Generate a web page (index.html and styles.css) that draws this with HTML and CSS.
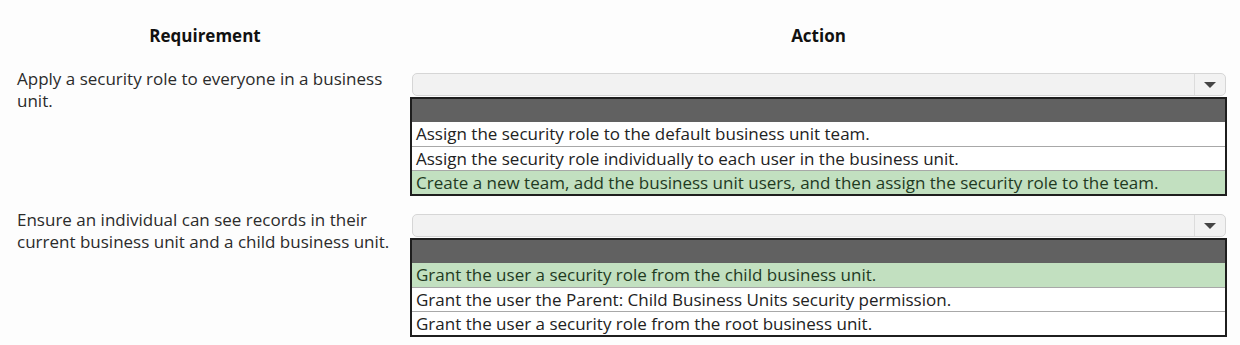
FILE: index.html
```html
<!DOCTYPE html>
<html>
<head>
<meta charset="utf-8">
<link rel="stylesheet" href="styles.css">
</head>
<body>
<div class="page">
  <div class="head">
    <div class="h-req">Requirement</div>
    <div class="h-act">Action</div>
  </div>
  <div class="row">
    <div class="req">Apply a security role to everyone in a business unit.</div>
    <div class="act">
      <div class="select"><div class="sel-body"></div><div class="sel-btn"><span class="tri"></span></div></div>
      <div class="list">
        <div class="list-head"></div>
        <div class="opt">Assign the security role to the default business unit team.</div>
        <div class="opt">Assign the security role individually to each user in the business unit.</div>
        <div class="opt sel">Create a new team, add the business unit users, and then assign the security role to the team.</div>
      </div>
    </div>
  </div>
  <div class="row row2">
    <div class="req">Ensure an individual can see records in their current business unit and a child business unit.</div>
    <div class="act">
      <div class="select"><div class="sel-body"></div><div class="sel-btn"><span class="tri"></span></div></div>
      <div class="list">
        <div class="list-head"></div>
        <div class="opt sel">Grant the user a security role from the child business unit.</div>
        <div class="opt">Grant the user the Parent: Child Business Units security permission.</div>
        <div class="opt">Grant the user a security role from the root business unit.</div>
      </div>
    </div>
  </div>
</div>
</body>
</html>
```

FILE: styles.css
```css
html, body {
  margin: 0;
  padding: 0;
  background: #fdfdfd;
}
.page {
  width: 1240px;
  height: 345px;
  font-family: "Open Sans", "Noto Sans", sans-serif;
  font-size: 17px;
  color: #2b2b2b;
  box-sizing: border-box;
  padding-left: 17px;
  overflow: hidden;
}
.head {
  display: grid;
  grid-template-columns: 393px 817px;
  height: 70px;
  align-items: center;
  font-weight: 700;
  color: #111;
  font-size: 17px;
}
.h-req { text-align: center; margin-left: -17px; }
.h-act { text-align: center; }
.row {
  display: grid;
  grid-template-columns: 393px 817px;
}
.row2 { margin-top: 15px; }
.req {
  line-height: 22px;
  padding-right: 8px;
  margin-top: -2px;
}
.act { display: flex; flex-direction: column; }
.select {
  margin: 3px 1px 0 2px;
  height: 21px;
  border: 1px solid #d6d6d6;
  border-radius: 5px;
  background: #f2f2f2;
  display: flex;
}
.sel-body { flex: 1; }
.sel-btn {
  width: 30px;
  border-left: 1px solid #dcdcdc;
  display: flex;
  align-items: center;
  justify-content: center;
}
.tri {
  width: 0;
  height: 0;
  border-left: 6px solid transparent;
  border-right: 6px solid transparent;
  border-top: 6px solid #444;
}
.list {
  margin-top: 1px;
  border: 2px solid #1e1e1e;
  background: #fff;
}
.list-head {
  height: 23px;
  background: #616161;
}
.opt {
  height: 23px;
  line-height: 23px;
  padding-left: 4px;
  border-top: 1px solid #a8a8a8;
  white-space: nowrap;
  color: #222;
}
.list-head + .opt { border-top: none; height: 24px; }
.opt.sel { background: #c2e0c0; color: #1f3a1f; }
```
